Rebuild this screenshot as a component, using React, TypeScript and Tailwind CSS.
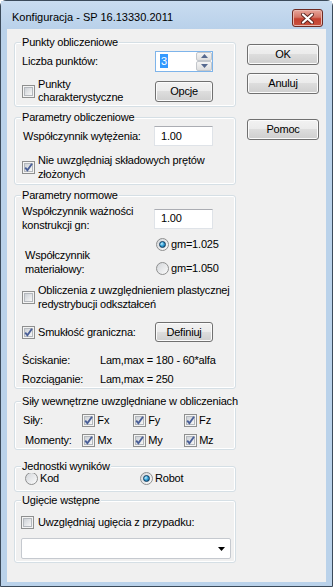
import React from "react";

const btn =
  "flex items-center justify-center rounded-[3px] border border-[#707070] bg-[linear-gradient(to_bottom,#f2f2f2_0%,#ebebeb_49%,#dddddd_50%,#cfcfcf_100%)] shadow-[inset_0_0_0_1px_#fbfbfb] text-[11px] text-black";

const field = "flex items-center border border-[#abadb3] border-b-[#dfe3e8] border-l-[#dfe3e8] border-r-[#dfe3e8] bg-white";

function Check({ checked }: { checked?: boolean }) {
  return (
    <span className="relative flex h-[13px] w-[13px] shrink-0 items-center justify-center border border-[#8e8f8f] bg-[#f4f4f4]">
      <span className="h-[9px] w-[9px] border border-[#b4b8bd] bg-[linear-gradient(135deg,#cdd1d6,#f7f7f7)]" />
      {checked && (
        <svg className="absolute left-[0px] top-[0px]" width="11" height="11" viewBox="0 0 11 11">
          <path d="M2.2 5.6 L4.4 8.2 L9 1.8" fill="none" stroke="#4a5f97" strokeWidth="1.9" />
        </svg>
      )}
    </span>
  );
}

function Radio({ on }: { on?: boolean }) {
  return (
    <span className="flex h-[13px] w-[13px] shrink-0 items-center justify-center rounded-full border border-[#8e8f8f] bg-[linear-gradient(135deg,#d3d6da,#fbfbfb)]">
      {on && (
        <span className="h-[7px] w-[7px] rounded-full border border-[#0c3a5e] bg-[radial-gradient(circle_at_35%_35%,#c9f0ff_0%,#36a3d9_45%,#0d4f7d_100%)]" />
      )}
    </span>
  );
}

function Group({
  title,
  className,
  children,
}: {
  title: string;
  className: string;
  children: React.ReactNode;
}) {
  return (
    <div className={`relative rounded-[3px] border border-[#d5dfe5] shadow-[inset_0_0_0_1px_#ffffff] ${className}`}>
      <span className="absolute -top-[8px] left-[6px] whitespace-nowrap bg-[#f0f0f0] px-[1px] leading-[14px]">{title}</span>
      {children}
    </div>
  );
}

function SpinArrow({ up }: { up?: boolean }) {
  return (
    <div className="flex flex-1 items-center justify-center rounded-[2px] border border-[#c3c7cc] bg-[linear-gradient(to_bottom,#f5f5f5,#dedede)]">
      <svg width="7" height="4" viewBox="0 0 7 4">
        <path d={up ? "M0 4 L3.5 0 L7 4 Z" : "M0 0 L3.5 4 L7 0 Z"} fill="#56698f" />
      </svg>
    </div>
  );
}

export default function App() {
  return (
    <div className="flex h-[587px] w-[333px] flex-col rounded-t-[6px] border border-[#3b4a5a] bg-[#bad2ea] font-['Liberation_Sans',Arial,sans-serif] text-[11px] tracking-[-0.2px] text-black">
      {/* title bar */}
      <div className="flex h-[28px] shrink-0 items-start bg-[linear-gradient(to_bottom,#c9dcf0,#b9d1ea)]">
        <span className="ml-[11px] mt-[9px] leading-[15px] tracking-normal">Konfiguracja - SP 16.13330.2011</span>
        <div className="ml-auto mr-[9px] mt-[8px] flex h-[18px] w-[31px] items-center justify-center rounded-[3px] border border-[#6e2b23] bg-[linear-gradient(to_bottom,#e8a79c_0%,#d47566_45%,#c4402f_55%,#c9533f_100%)] shadow-[inset_0_0_0_1px_#eab7ae]">
          <svg width="13" height="11" viewBox="0 0 13 11">
            <path d="M2 1.5 L11 9.5 M11 1.5 L2 9.5" stroke="#5b2520" strokeWidth="4" strokeLinecap="round" />
            <path d="M2 1.5 L11 9.5 M11 1.5 L2 9.5" stroke="#ffffff" strokeWidth="2.2" strokeLinecap="round" />
          </svg>
        </div>
      </div>

      {/* client */}
      <div className="mb-[4px] ml-[6px] mr-[6px] flex flex-1 bg-[#f0f0f0]">
        <div className="ml-[7px] mt-[13px] flex w-[222px] flex-col">
          <Group title="Punkty obliczeniowe" className="pb-[5px] pl-[7px] pt-[8px]">
            <div className="flex h-[20px] items-center">
              <span className="w-[133px]">Liczba punktów:</span>
              <div className="flex h-[21px] w-[58px] border border-[#7eb4ea] bg-white">
                <div className="flex flex-1 items-center pl-[4px]">
                  <span className="bg-[#3399ff] px-[1px] leading-[14px] text-white">3</span>
                </div>
                <div className="flex w-[16px] flex-col">
                  <SpinArrow up />
                  <SpinArrow />
                </div>
              </div>
            </div>
            <div className="mt-[10px] flex h-[20px] items-center">
              <div className="flex w-[133px] items-center gap-[3px]">
                <Check />
                <span className="leading-[13.5px]">
                  Punkty
                  <br />
                  charakterystyczne
                </span>
              </div>
              <div className={`${btn} h-[21px] w-[58px]`}>Opcje</div>
            </div>
          </Group>

          <Group title="Parametry obliczeniowe" className="mt-[10px] pb-[3px] pl-[7px] pt-[8px]">
            <div className="flex h-[20px] items-center">
              <span className="w-[132px] pl-[1px]">Współczynnik wytężenia:</span>
              <div className={`${field} h-[20px] w-[59px] pl-[6px]`}>1.00</div>
            </div>
            <div className="mt-[8px] flex items-center gap-[3px]">
              <Check checked />
              <span className="leading-[13.5px]">
                Nie uwzględniaj składowych prętów
                <br />
                złożonych
              </span>
            </div>
          </Group>

          <Group title="Parametry normowe" className="mt-[10px] pb-[2px] pl-[7px] pt-[9px]">
            <div className="flex items-center">
              <span className="w-[132px] leading-[13.5px]">
                Współczynnik ważności
                <br />
                konstrukcji gn:
              </span>
              <div className={`${field} h-[20px] w-[59px] pl-[6px]`}>1.00</div>
            </div>
            <div className="mt-[4px] flex">
              <span className="w-[134px] pl-[3px] pt-[13px] leading-[13.5px]">
                Współczynnik
                <br />
                materiałowy:
              </span>
              <div className="flex flex-col gap-[8px]">
                <div className="flex h-[16px] items-center gap-[2px]">
                  <Radio on />
                  <span>gm=1.025</span>
                </div>
                <div className="flex h-[16px] items-center gap-[2px]">
                  <Radio />
                  <span>gm=1.050</span>
                </div>
              </div>
            </div>
            <div className="mt-[8px] flex items-center gap-[3px]">
              <Check />
              <span className="leading-[13.5px]">
                Obliczenia z uwzględnieniem plastycznej
                <br />
                redystrybucji odkształceń
              </span>
            </div>
            <div className="mt-[11px] flex h-[20px] items-center">
              <div className="flex w-[133px] items-center gap-[3px]">
                <Check checked />
                <span>Smukłość graniczna:</span>
              </div>
              <div className={`${btn} h-[20px] w-[58px]`}>Definiuj</div>
            </div>
            <div className="mt-[11px] flex leading-[14px]">
              <span className="w-[78px]">Ściskanie:</span>
              <span>Lam,max = 180 - 60*alfa</span>
            </div>
            <div className="mt-[5px] flex leading-[14px]">
              <span className="w-[78px]">Rozciąganie:</span>
              <span>Lam,max = 250</span>
            </div>
          </Group>

          <Group title="Siły wewnętrzne uwzględniane w obliczeniach" className="mt-[12px] pb-[1px] pl-[7px] pt-[10px]">
            <div className="flex h-[16px] items-center">
              <span className="w-[64px] pl-[1px]">Siły:</span>
              {["Fx", "Fy", "Fz"].map((l) => (
                <div key={l} className="flex w-[54px] items-center gap-[2px]">
                  <Check checked />
                  <span>{l}</span>
                </div>
              ))}
            </div>
            <div className="mt-[4px] flex h-[16px] items-center">
              <span className="w-[64px] pl-[3px]">Momenty:</span>
              {["Mx", "My", "Mz"].map((l) => (
                <div key={l} className="flex w-[54px] items-center gap-[2px]">
                  <Check checked />
                  <span>{l}</span>
                </div>
              ))}
            </div>
          </Group>

          <Group title="Jednostki wyników" className="mt-[16px] pb-[6px] pl-[10px] pt-[4px]">
            <div className="flex h-[14px] items-center">
              <div className="flex w-[115px] items-center gap-[2px]">
                <Radio />
                <span>Kod</span>
              </div>
              <div className="flex items-center gap-[2px]">
                <Radio on />
                <span>Robot</span>
              </div>
            </div>
          </Group>

          <Group title="Ugięcie wstępne" className="mt-[8px] pb-[3px] pl-[6px] pr-[4px] pt-[14px]">
            <div className="flex h-[15px] items-center gap-[4px]">
              <Check />
              <span>Uwzględniaj ugięcia z przypadku:</span>
            </div>
            <div className="mt-[8px] flex h-[21px] items-center justify-end rounded-[2px] border border-[#c5c9cf] bg-white pr-[5px]">
              <svg width="7" height="4" viewBox="0 0 7 4">
                <path d="M0 0 L7 0 L3.5 4 Z" fill="#000000" />
              </svg>
            </div>
          </Group>
        </div>

        <div className="ml-[11px] mt-[15px] flex w-[72px] flex-col">
          <div className={`${btn} h-[21px] border-[#3c7fb1] shadow-[inset_0_0_0_1px_#a6e1fb]`}>OK</div>
          <div className={`${btn} mt-[8px] h-[21px]`}>Anuluj</div>
          <div className={`${btn} mt-[25px] h-[21px]`}>Pomoc</div>
        </div>
      </div>
    </div>
  );
}
